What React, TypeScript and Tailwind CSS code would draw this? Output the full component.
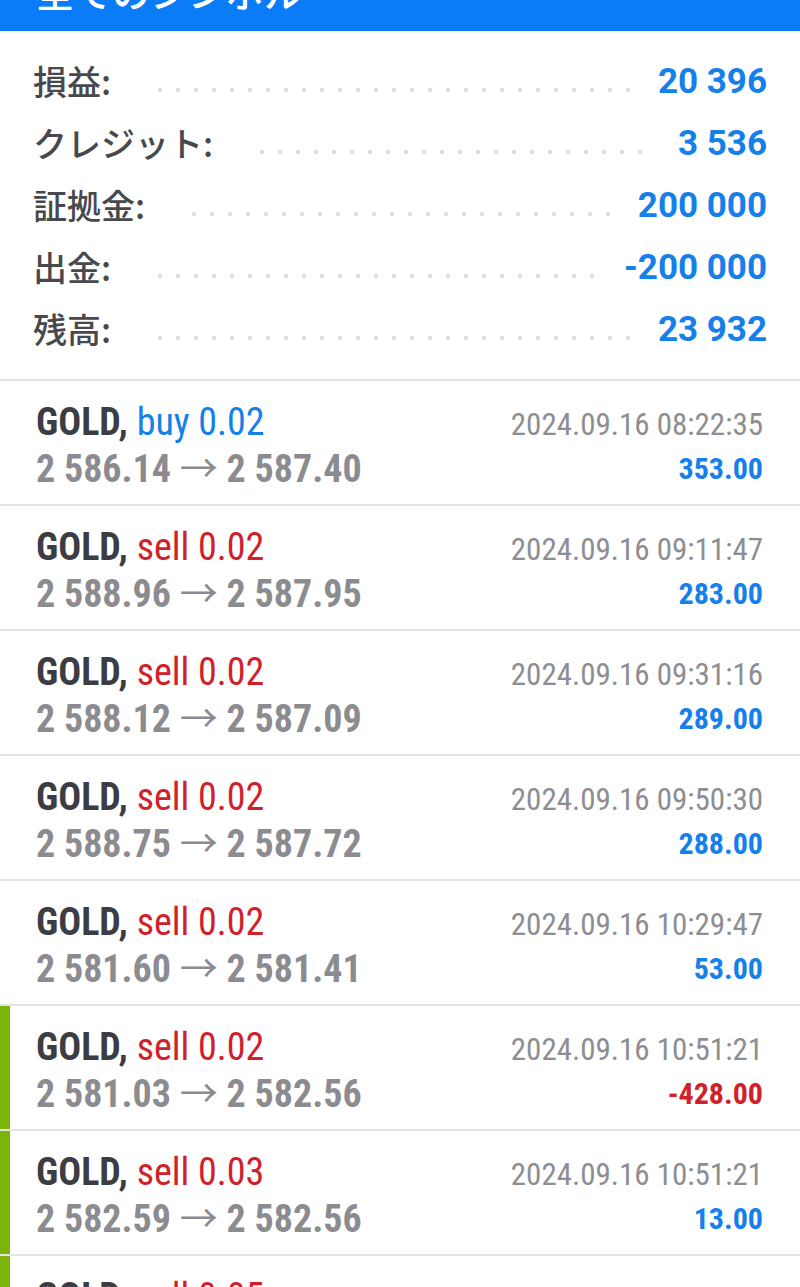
import React from 'react';

type Trade = {
  side: 'buy' | 'sell';
  lots: string;
  open: string;
  close: string;
  time: string;
  profit: string;
  flagged?: boolean;
};

const summary = [
  { label: '損益:', value: '20 396' },
  { label: 'クレジット:', value: '3 536' },
  { label: '証拠金:', value: '200 000' },
  { label: '出金:', value: '-200 000' },
  { label: '残高:', value: '23 932' },
];

const trades: Trade[] = [
  { side: 'buy', lots: '0.02', open: '2 586.14', close: '2 587.40', time: '2024.09.16 08:22:35', profit: '353.00' },
  { side: 'sell', lots: '0.02', open: '2 588.96', close: '2 587.95', time: '2024.09.16 09:11:47', profit: '283.00' },
  { side: 'sell', lots: '0.02', open: '2 588.12', close: '2 587.09', time: '2024.09.16 09:31:16', profit: '289.00' },
  { side: 'sell', lots: '0.02', open: '2 588.75', close: '2 587.72', time: '2024.09.16 09:50:30', profit: '288.00' },
  { side: 'sell', lots: '0.02', open: '2 581.60', close: '2 581.41', time: '2024.09.16 10:29:47', profit: '53.00' },
  { side: 'sell', lots: '0.02', open: '2 581.03', close: '2 582.56', time: '2024.09.16 10:51:21', profit: '-428.00', flagged: true },
  { side: 'sell', lots: '0.03', open: '2 582.59', close: '2 582.56', time: '2024.09.16 10:51:21', profit: '13.00', flagged: true },
  { side: 'sell', lots: '0.05', open: '2 582.60', close: '2 582.56', time: '2024.09.16 10:51:21', profit: '20.00', flagged: true },
];

function SummaryRow({ label, value }: { label: string; value: string }) {
  return (
    <div className="flex h-[62px] items-center">
      <span className="font-['Noto_Sans_CJK_JP',sans-serif] text-[34px] font-medium leading-none text-[#48484d]">
        {label}
      </span>
      <span className="ml-[40px] mr-[22px] mt-[18px] h-[6px] flex-1 bg-[radial-gradient(circle,#dedede_2px,transparent_2.6px)] bg-[length:18px_6px] bg-repeat-x" />
      <span className="font-['Roboto',sans-serif] text-[35px] font-bold leading-none text-[#1580ea]">{value}</span>
    </div>
  );
}

function TradeRow({ t }: { t: Trade }) {
  const negative = t.profit.startsWith('-');
  return (
    <div className="flex h-[125px] border-b-2 border-[#e4e4e4] font-['Roboto',sans-serif] [font-stretch:75%]">
      <div className={t.flagged ? 'w-[10px] bg-[#7db40b]' : 'w-[10px]'} />
      <div className="flex flex-1 justify-between pl-[26px] pr-[37px] pt-[19px]">
        <div className="flex flex-col">
          <div className="text-[38px] leading-[44px]">
            <span className="font-bold text-[#3c3c43]">GOLD, </span>
            <span className={t.side === 'buy' ? 'text-[#1580ea]' : 'text-[#d0212b]'}>
              {t.side} {t.lots}
            </span>
          </div>
          <div className="text-[38px] font-bold leading-[44px] text-[#8b8b90]">
            {t.open}{' '}
            <span className="font-['Noto_Sans_CJK_JP',sans-serif] font-normal">→</span>{' '}
            {t.close}
          </div>
        </div>
        <div className="flex flex-col items-end pt-[3px]">
          <div className="text-[31px] leading-[44px] text-[#8e8e92]">{t.time}</div>
          <div className={`text-[30px] font-bold leading-[44px] ${negative ? 'text-[#d0212b]' : 'text-[#1580ea]'}`}>
            {t.profit}
          </div>
        </div>
      </div>
    </div>
  );
}

export default function App() {
  return (
    <div className="h-[1287px] w-[800px] overflow-hidden bg-white">
      <header className="h-[31px] overflow-hidden bg-[#0a7cf7] pl-[36px]">
        <div className="-mt-[28px] font-['Noto_Sans_CJK_JP',sans-serif] text-[38px] font-medium leading-none text-white">
          全てのシンボル
        </div>
      </header>

      <section className="border-b-2 border-[#e4e4e4] px-[33px] pb-[19px] pt-[19px]">
        {summary.map((s) => (
          <SummaryRow key={s.label} label={s.label} value={s.value} />
        ))}
      </section>

      <div>
        {trades.map((t, i) => (
          <TradeRow key={i} t={t} />
        ))}
      </div>
    </div>
  );
}
